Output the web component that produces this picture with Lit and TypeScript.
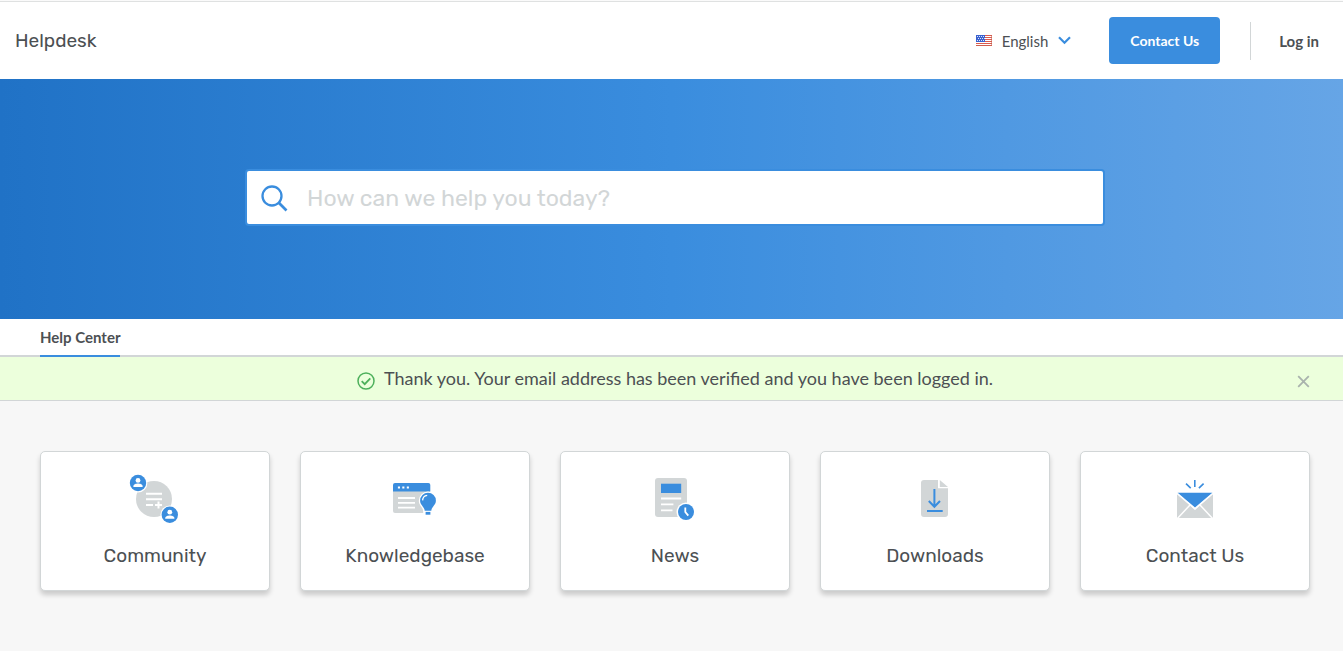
import { LitElement, html, svg, css } from "lit";
import { customElement, property } from "lit/decorators.js";

const communityIcon = svg`
  <circle cx="29" cy="29" r="18" fill="#d2d6d7"/>
  <path d="M21 23.8h16M21 29.2h16M21 35h7M30 35h7M33.5 31.5v7" stroke="#fff" stroke-width="2"/>
  <circle cx="13" cy="13" r="9.4" fill="#fff"/>
  <circle cx="13" cy="13" r="8.2" fill="#3a8dde"/>
  <circle cx="13" cy="10.4" r="2.4" fill="#fff"/>
  <path d="M8.4 17v-.6c0-2 2.6-2.8 4.6-2.8s4.6.8 4.6 2.8v.6z" fill="#fff"/>
  <circle cx="44.8" cy="44.8" r="9.4" fill="#fff"/>
  <circle cx="44.8" cy="44.8" r="8.2" fill="#3a8dde"/>
  <circle cx="44.8" cy="42.2" r="2.4" fill="#fff"/>
  <path d="M40.2 48.8v-.6c0-2 2.6-2.8 4.6-2.8s4.6.8 4.6 2.8v.6z" fill="#fff"/>`;

const knowledgeIcon = svg`
  <path d="M8 21h37v20a2 2 0 0 1-2 2H10a2 2 0 0 1-2-2z" fill="#d2d6d7"/>
  <path d="M8 21.6V15a2 2 0 0 1 2-2h33.3a2 2 0 0 1 2 2v6.6z" fill="#3a8dde"/>
  <path d="M12.9 17.6H15M17.3 17.6h2.1M21.8 17.6h2.1" stroke="#fff" stroke-width="2"/>
  <path d="M13 28h17M13 32.8h17M13 37.7h17" stroke="#fff" stroke-width="1.8"/>
  <path d="M43 21.6a9.2 9.2 0 0 0-9.2 9.1c0 4.6 4.4 6.5 4.4 11V45h9.6v-3.3c0-4.5 4.4-6.4 4.4-11A9.2 9.2 0 0 0 43 21.6z" fill="#fff"/>
  <path d="M43 22.8a7.9 7.9 0 0 0-7.9 7.9c0 4.3 4.3 6 4.6 10h6.6c.3-4 4.6-5.7 4.600-10a7.900 7.900 0 0 0-7.900-7.900z" fill="#3a8dde"/>
  <path d="M40.6 41.900h4.800v2.800h-4.800z" fill="#3a8dde"/>
  <path d="M37.6 30.4a5.3 5.3 0 0 1 4.6-5" stroke="#fff" stroke-width="1.3" fill="none"/>`;

const newsIcon = svg`
  <rect x="10" y="8" width="32" height="39" rx="3" fill="#d2d6d7"/>
  <path d="M16 13.7h20.2V23H16z" fill="#3a8dde"/>
  <path d="M16 28.5h20.2M16 34.4h12.4M16 40.3h11.5" stroke="#fff" stroke-width="1.8"/>
  <circle cx="41" cy="42" r="9.5" fill="#fff"/>
  <circle cx="41" cy="42" r="8" fill="#3a8dde"/>
  <path d="M40.3 37.4V42l3 3.6" stroke="#fff" stroke-width="1.8" fill="none"/>`;

const downloadIcon = svg`
  <path d="M19 10h14v8.3h10V44a3 3 0 0 1-3 3H19a3 3 0 0 1-3-3V13a3 3 0 0 1 3-3z" fill="#d2d6d7"/>
  <path d="M34.8 10l8.200 7H34.8z" fill="#d2d6d7"/>
  <path d="M29.4 19v17M23.800 31l5.600 5.800L35 31M22 41.100h15.700" stroke="#3a8dde" stroke-width="2" fill="none"/>`;

const mailIcon = svg`
  <path d="M12 23v25h36V23L30 40z" fill="#d2d6d7"/>
  <path d="M12.4 48.400l12.600-13.400M47.600 48.400L35 35" stroke="#fff" stroke-width="1.500"/>
  <path d="M12.600 22.700h34.800L30 37.600z" fill="#3a8dde"/>
  <path d="M12 23.500l18 15.400 18-15.400" stroke="#fff" stroke-width="1.300" fill="none"/>
  <path d="M29.800 10v7M21 13.700l4.700 4.500M38.600 13.700l-4.700 4.500" stroke="#3a8dde" stroke-width="1.600"/>`;

const sections = [
  { title: "Community", icon: communityIcon },
  { title: "Knowledgebase", icon: knowledgeIcon },
  { title: "News", icon: newsIcon },
  { title: "Downloads", icon: downloadIcon },
  { title: "Contact Us", icon: mailIcon },
];

@customElement("help-card")
class HelpCard extends LitElement {
  @property() heading = "";
  @property({ attribute: false }) icon: unknown;

  static styles = css`
    :host {
      display: block;
    }
    .card {
      display: flex;
      flex-direction: column;
      align-items: center;
      gap: 13px;
      box-sizing: border-box;
      padding: 18px 10px 21px;
      background: #fff;
      border: 1px solid #d2d6d7;
      border-radius: 5px;
      box-shadow: 0 4px 5px rgba(0, 0, 0, 0.18);
      color: #4c5053;
      text-decoration: none;
    }
    .icon {
      width: 60px;
      height: 60px;
    }
    .title {
      font: 400 19px/26px Rubik, Roboto, sans-serif;
    }
  `;

  render() {
    return html`<a class="card" href="#">
      <svg class="icon" viewBox="0 0 60 60" aria-hidden="true">${this.icon}</svg>
      <span class="title">${this.heading}</span>
    </a>`;
  }
}

@customElement("app-root")
class AppRoot extends LitElement {
  static styles = css`
    :host {
      display: block;
      min-height: 100vh;
      background: #f7f7f7;
      color: #4c5053;
      font: 400 15px/20px Lato, sans-serif;
    }
    a {
      color: inherit;
      text-decoration: none;
    }
    button {
      font: inherit;
      color: inherit;
      border: 0;
      padding: 0;
      background: none;
      cursor: pointer;
    }
    .header {
      display: flex;
      align-items: center;
      justify-content: space-between;
      box-sizing: border-box;
      height: 79px;
      padding: 2px 24px 0 15px;
      background: linear-gradient(#fafafa 1px, #dfe1e1 1px 2px, #fff 2px);
    }
    .brand {
      font: 400 19px/24px Rubik, Roboto, sans-serif;
    }
    .actions {
      display: flex;
      align-items: center;
    }
    .language {
      display: flex;
      align-items: center;
      gap: 10px;
      margin-right: 38px;
    }
    .contact {
      box-sizing: border-box;
      height: 47px;
      padding: 0 21px;
      margin-right: 30px;
      border-radius: 4px;
      background: #3a8dde;
      color: #fff;
      font-size: 14px;
      font-weight: 700;
    }
    .login {
      padding: 9px 0 9px 28px;
      border-left: 1px solid #d2d6d7;
      font-weight: 700;
    }
    .hero {
      display: flex;
      justify-content: center;
      padding: 90px 33px 93px 40px;
      background: linear-gradient(to right, #2072c6, #3a8dde 50%, #66a5e6);
    }
    .search {
      display: flex;
      align-items: center;
      box-sizing: border-box;
      width: 100%;
      max-width: 860px;
      border: 2px solid #3a8dde;
      border-radius: 4px;
      background: #fff;
    }
    .search-icon {
      flex: none;
      margin: 2px 19px 0 14px;
    }
    .query {
      flex: 1;
      min-width: 0;
      height: 53px;
      padding: 0;
      border: 0;
      outline: 0;
      background: none;
      color: #4c5053;
      font: 400 23px/28px Rubik, Roboto, sans-serif;
    }
    .query::placeholder {
      color: #d2d6d7;
      opacity: 1;
    }
    .tabs {
      display: flex;
      padding: 0 40px;
      background: #fff;
      box-shadow: inset 0 -2px #d2d6d7;
    }
    .tab {
      padding: 8px 0;
      border-bottom: 2px solid #3a8dde;
      font-weight: 700;
    }
    .notice {
      display: flex;
      align-items: center;
      padding: 9px 33px 10px 40px;
      border-bottom: 1px solid #d2d6d7;
      background: #ecffdc;
      font-size: 18px;
      line-height: 24px;
    }
    .message {
      display: flex;
      align-items: center;
      justify-content: center;
      flex: 1;
      gap: 9px;
      padding-left: 13px;
    }
    .check {
      margin-top: 5px;
    }
    .close {
      display: flex;
      margin-top: 6px;
    }
    .cards {
      display: grid;
      grid-template-columns: repeat(5, minmax(0, 1fr));
      gap: 30px;
      padding: 50px 33px 60px 40px;
    }
    @media (max-width: 900px) {
      .cards {
        grid-template-columns: repeat(2, minmax(0, 1fr));
      }
    }
  `;

  render() {
    return html`
      <header class="header">
        <a class="brand" href="#">Helpdesk</a>
        <div class="actions">
          <button class="language">
            <svg width="16" height="11" viewBox="0 0 16 11" aria-hidden="true">
              <rect width="16" height="11" fill="#fff"/>
              <path d="M0 .5h16M0 2.5h16M0 4.5h16M0 6.5h16M0 8.5h16M0 10.5h16" stroke="#dc5a4e"/>
              <rect width="9" height="7" fill="#3b62cf"/>
              <path d="M1 1.5h8M2 3.5h7M1 5.5h8" stroke="#dce5fa" stroke-dasharray="1 1"/>
              <path d="M15.5 0v11M0 10.5h16" stroke="#c8604f" opacity=".6"/>
            </svg>
            <span>English</span>
            <svg width="13" height="9" viewBox="0 0 13 9" aria-hidden="true">
              <path d="M1 1.2l5.500 5.500L12 1.200" stroke="#3a8dde" stroke-width="2.200" fill="none"/>
            </svg>
          </button>
          <button class="contact">Contact Us</button>
          <a class="login" href="#">Log in</a>
        </div>
      </header>

      <div class="hero">
        <form class="search" role="search">
          <svg class="search-icon" width="27" height="27" viewBox="0 0 27 27" aria-hidden="true">
            <circle cx="11" cy="11" r="9.5" stroke="#3a8dde" stroke-width="2.3" fill="none"/>
            <path d="M17.8 17.8l7.7 7.7" stroke="#3a8dde" stroke-width="2.7"/>
          </svg>
          <input class="query" type="text" aria-label="Search" placeholder="How can we help you today?">
        </form>
      </div>

      <nav class="tabs"><a class="tab" href="#">Help Center</a></nav>

      <div class="notice" role="status">
        <div class="message">
          <svg class="check" width="18" height="18" viewBox="0 0 18 18" fill="none" stroke="#4db05b" aria-hidden="true">
            <circle cx="9" cy="9" r="8" stroke-width="1.5"/>
            <path d="M4.700 9.200l3 3 5.600-5.900" stroke-width="1.800"/>
          </svg>
          <span>Thank you. Your email address has been verified and you have been logged in.</span>
        </div>
        <button class="close" aria-label="Close">
          <svg width="13" height="13" viewBox="0 0 13 13" aria-hidden="true">
            <path d="M1.200 1.200l10.600 10.600M11.800 1.200L1.200 11.800" stroke="#a9b3ad" stroke-width="1.800"/>
          </svg>
        </button>
      </div>

      <main class="cards">
        ${sections.map((s) => html`<help-card .heading=${s.title} .icon=${s.icon}></help-card>`)}
      </main>
    `;
  }
}
